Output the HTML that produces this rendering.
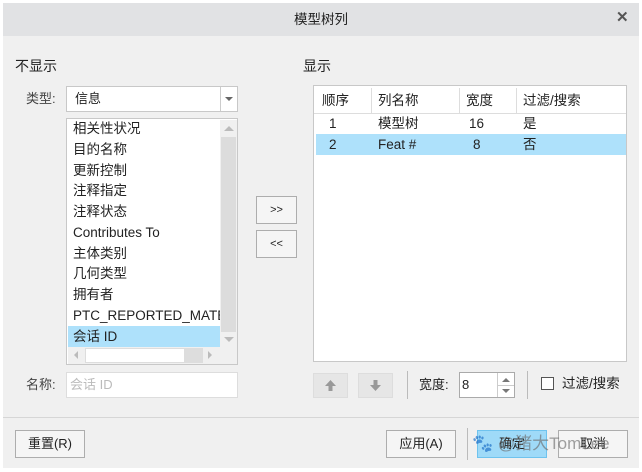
<!DOCTYPE html>
<html><head><meta charset="utf-8"><style>
*{box-sizing:border-box;margin:0;padding:0}
body{width:642px;height:472px;background:#fff;position:relative;overflow:hidden;font-family:"Liberation Sans","Noto Sans CJK SC",sans-serif;font-size:13px;color:#222;line-height:18px}
.a{position:absolute}
.dlg{left:3px;top:3px;width:636px;height:465px;background:#f0f0f0}
.tb{left:3px;top:3px;width:636px;height:33px;background:#e1e2e4}
.box{background:#fff;border:1px solid #c8c8c8}
.btn{background:#f5f5f5;border:1px solid #adadad;text-align:center;font-size:13px}
.it{position:absolute;left:6px;font-size:13.5px;white-space:nowrap;height:20px;line-height:20px}
</style></head><body>
<div class="a dlg"></div>
<div class="a tb"></div>
<div class="a" style="left:0;width:642px;top:11px;text-align:center;font-size:13.5px">模型树列</div>
<div class="a" style="left:616px;top:9px;font-size:15px;font-weight:bold;color:#555">✕</div>

<div class="a" style="left:15px;top:57px;font-size:14px">不显示</div>
<div class="a" style="left:303px;top:57px;font-size:14px">显示</div>

<div class="a" style="left:26px;top:90px;color:#444">类型:</div>
<div class="a box" style="left:66px;top:86px;width:172px;height:26px"></div>
<div class="a" style="left:75px;top:90px">信息</div>
<div class="a" style="left:220px;top:87px;width:1px;height:24px;background:#ccc"></div>
<div class="a" style="left:225px;top:97px;width:0;height:0;border-left:4px solid transparent;border-right:4px solid transparent;border-top:4px solid #666"></div>

<div class="a box" style="left:66px;top:118px;width:172px;height:247px;overflow:hidden">
<div class="a" style="left:1px;top:207px;width:152px;height:21px;background:#aee1fb"></div>
<div class="it" style="top:0px">相关性状况</div>
<div class="it" style="top:21px">目的名称</div>
<div class="it" style="top:42px">更新控制</div>
<div class="it" style="top:62px">注释指定</div>
<div class="it" style="top:83px">注释状态</div>
<div class="it" style="top:104px">Contributes To</div>
<div class="it" style="top:125px">主体类别</div>
<div class="it" style="top:145px">几何类型</div>
<div class="it" style="top:166px">拥有者</div>
<div class="it" style="top:187px;width:147px;overflow:hidden">PTC_REPORTED_MATERIAL</div>
<div class="it" style="top:208px">会话 ID</div>
<div class="a" style="left:153px;top:1px;width:17px;height:227px;background:#f0f0f0"></div>
<div class="a" style="left:154px;top:18px;width:15px;height:195px;background:#dcdcdc"></div>
<div class="a" style="left:157px;top:7px;border-left:5px solid transparent;border-right:5px solid transparent;border-bottom:5px solid #bbb"></div>
<div class="a" style="left:157px;top:218px;border-left:5px solid transparent;border-right:5px solid transparent;border-top:5px solid #bbb"></div>
<div class="a" style="left:1px;top:228px;width:169px;height:17px;background:#f0f0f0"></div>
<div class="a" style="left:18px;top:229px;width:100px;height:15px;background:#fff;border:1px solid #ddd"></div>
<div class="a" style="left:118px;top:229px;width:18px;height:15px;background:#ddd"></div>
<div class="a" style="left:7px;top:232px;border-top:4px solid transparent;border-bottom:4px solid transparent;border-right:4px solid #bbb"></div>
<div class="a" style="left:141px;top:232px;border-top:4px solid transparent;border-bottom:4px solid transparent;border-left:4px solid #bbb"></div>
</div>

<div class="a btn" style="left:256px;top:196px;width:41px;height:28px;line-height:26px;font-size:11px">&gt;&gt;</div>
<div class="a btn" style="left:256px;top:230px;width:41px;height:28px;line-height:26px;font-size:11px">&lt;&lt;</div>

<div class="a" style="left:26px;top:376px;color:#444">名称:</div>
<div class="a box" style="left:66px;top:372px;width:172px;height:26px;border-color:#ddd"></div>
<div class="a" style="left:70px;top:376px;color:#bbb">会话 ID</div>

<div class="a box" style="left:313px;top:85px;width:314px;height:277px"></div>
<div class="a" style="left:314px;top:113px;width:312px;height:1px;background:#ddd"></div>
<div class="a" style="left:371px;top:88px;width:1px;height:25px;background:#ddd"></div>
<div class="a" style="left:459px;top:88px;width:1px;height:25px;background:#ddd"></div>
<div class="a" style="left:516px;top:88px;width:1px;height:25px;background:#ddd"></div>
<div class="a" style="left:316px;top:134px;width:310px;height:21px;background:#aee1fb"></div>
<div class="a" style="left:322px;top:92px;font-size:13.5px">顺序</div>
<div class="a" style="left:378px;top:92px;font-size:13.5px">列名称</div>
<div class="a" style="left:466px;top:92px;font-size:13.5px">宽度</div>
<div class="a" style="left:523px;top:92px;font-size:13.5px">过滤/搜索</div>
<div class="a" style="left:329px;top:115px;font-size:13.5px">1</div>
<div class="a" style="left:378px;top:115px;font-size:13.5px">模型树</div>
<div class="a" style="left:469px;top:115px;font-size:13.5px">16</div>
<div class="a" style="left:523px;top:115px;font-size:13.5px">是</div>
<div class="a" style="left:329px;top:136px;font-size:13.5px">2</div>
<div class="a" style="left:378px;top:136px;font-size:13.5px">Feat #</div>
<div class="a" style="left:473px;top:136px;font-size:13.5px">8</div>
<div class="a" style="left:523px;top:136px;font-size:13.5px">否</div>

<div class="a" style="left:313px;top:373px;width:35px;height:25px;background:#e6e6e6;border:1px solid #ddd"></div>
<svg class="a" style="left:324px;top:379px" width="13" height="13"><path d="M6.5 1L1 7h3.5v5h4V7H12z" fill="#999"/></svg>
<div class="a" style="left:358px;top:373px;width:35px;height:25px;background:#e6e6e6;border:1px solid #ddd"></div>
<svg class="a" style="left:369px;top:379px" width="13" height="13"><path d="M6.5 12L1 6h3.5V1h4v5H12z" fill="#999"/></svg>
<div class="a" style="left:407px;top:371px;width:1px;height:28px;background:#bbb"></div>
<div class="a" style="left:419px;top:376px">宽度:</div>
<div class="a box" style="left:459px;top:372px;width:56px;height:26px;border-color:#aaa"></div>
<div class="a" style="left:462px;top:376px">8</div>
<div class="a" style="left:497px;top:373px;width:1px;height:24px;background:#ccc"></div>
<div class="a" style="left:498px;top:385px;width:16px;height:1px;background:#ccc"></div>
<div class="a" style="left:502px;top:378px;border-left:4px solid transparent;border-right:4px solid transparent;border-bottom:4px solid #777"></div>
<div class="a" style="left:502px;top:389px;border-left:4px solid transparent;border-right:4px solid transparent;border-top:4px solid #777"></div>
<div class="a" style="left:527px;top:371px;width:1px;height:28px;background:#bbb"></div>
<div class="a" style="left:541px;top:377px;width:13px;height:13px;border:1px solid #555;background:#fff"></div>
<div class="a" style="left:562px;top:375px;font-size:13.5px">过滤/搜索</div>

<div class="a" style="left:3px;top:417px;width:636px;height:1px;background:#d6d6d6"></div>

<div class="a btn" style="left:15px;top:430px;width:70px;height:28px;line-height:26px">重置(R)</div>
<div class="a btn" style="left:386px;top:430px;width:70px;height:28px;line-height:26px">应用(A)</div>
<div class="a" style="left:467px;top:428px;width:1px;height:32px;background:#bbb"></div>
<div class="a" style="left:477px;top:430px;width:70px;height:28px;background:#9fdaf8;border:1px solid #6fc3ee;text-align:center;line-height:26px">确定</div>
<div class="a btn" style="left:558px;top:430px;width:70px;height:28px;line-height:26px">取消</div>
<div class="a" style="left:472px;top:434px;font-size:17px;line-height:20px;color:rgba(110,110,110,0.65);white-space:nowrap">🐾 @猪大TomLee</div>
</body></html>
